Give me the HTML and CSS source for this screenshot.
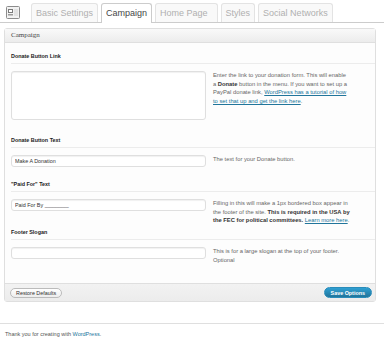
FILE: index.html
```html
<!DOCTYPE html>
<html lang="en">
<head>
    <meta charset="UTF-8">
    <meta name="viewport" content="width=device-width, initial-scale=1.0">
    <title>Theme Options</title>
    <link rel="stylesheet" href="styles.css">
</head>
<body>
    <div class="tabs">
        <span class="screen-icon">
            <svg width="14" height="13" viewBox="0 0 14 13">
                <rect x="0.5" y="0.5" width="13" height="12" rx="1" fill="#f2f2f2" stroke="#8c8c8c"/>
                <rect x="2.5" y="3.5" width="4" height="3" fill="#fff" stroke="#7a7a7a"/>
                <rect x="2" y="8" width="5" height="1.5" fill="#9a9a9a"/>
                <rect x="8" y="3" width="4" height="7" fill="#e2e2e2"/>
            </svg>
        </span>
        <a class="tab" href="#">Basic Settings</a>
        <a class="tab active" href="#">Campaign</a>
        <a class="tab tab-wide" href="#">Home Page</a>
        <a class="tab" href="#">Styles</a>
        <a class="tab" href="#">Social Networks</a>
    </div>

    <div class="panel">
        <h3 class="panel-head">Campaign</h3>
        <div class="panel-body">
            <div class="row">
                <h4 class="row-label">Donate Button Link</h4>
                <div class="row-body row-link">
                    <textarea class="field field-area"></textarea>
                    <p class="desc">Enter the link to your donation form. This will enable a <b>Donate</b> button in the menu. If you want to set up a PayPal donate link, <a href="#">WordPress has a tutorial of how to set that up and get the link here</a>.</p>
                </div>
            </div>

            <div class="row">
                <h4 class="row-label">Donate Button Text</h4>
                <div class="row-body row-text">
                    <input class="field" type="text" value="Make A Donation">
                    <p class="desc">The text for your Donate button.</p>
                </div>
            </div>

            <div class="row">
                <h4 class="row-label">"Paid For" Text</h4>
                <div class="row-body row-paid">
                    <input class="field" type="text" value="Paid For By ________">
                    <p class="desc">Filling in this will make a 1px bordered box appear in the footer of the site. <b>This is required in the USA by the FEC for political committees.</b> <a href="#">Learn more here</a>.</p>
                </div>
            </div>

            <div class="row">
                <h4 class="row-label">Footer Slogan</h4>
                <div class="row-body row-slogan">
                    <input class="field" type="text" value="">
                    <p class="desc">This is for a large slogan at the top of your footer. Optional</p>
                </div>
            </div>
        </div>
        <div class="panel-foot">
            <button class="btn">Restore Defaults</button>
            <button class="btn btn-primary">Save Options</button>
        </div>
    </div>

    <div class="footer">
        <p>Thank you for creating with <a href="#">WordPress</a>.</p>
    </div>
</body>
</html>
```

FILE: styles.css
```css
body {
    margin: 0;
    background-color: #fff;
    color: #333;
    font-family: "Liberation Sans", Arial, sans-serif;
}

a {
    color: #21759b;
}

/* tabs */
.tabs {
    display: flex;
    align-items: flex-end;
    height: 22px;
    border-bottom: 1px solid #ccc;
}

.screen-icon {
    display: block;
    width: 14px;
    height: 13px;
    margin: 0 8px 3px 6px;
}

.screen-icon svg {
    display: block;
}

.tab {
    display: block;
    height: 19px;
    box-sizing: border-box;
    padding: 0 4px;
    margin-left: 3px;
    border: 1px solid #e3e3e3;
    border-bottom: none;
    border-radius: 3px 3px 0 0;
    background-color: #f9f9f9;
    color: #b0b0b0;
    font-size: 9px;
    line-height: 18px;
    text-decoration: none;
}

.tab-wide {
    padding-right: 9px;
}

.tab.active {
    height: 20px;
    margin-bottom: -1px;
    border-color: #ccc;
    background-color: #fff;
    color: #464646;
}

/* panel */
.panel {
    margin: 5px 8px 0 4px;
    border: 1px solid #dfdfdf;
    border-radius: 3px;
    background-color: #fdfdfd;
}

.panel-head {
    margin: 0;
    height: 13px;
    padding-left: 6px;
    border-bottom: 1px solid #dfdfdf;
    background: linear-gradient(#f9f9f9, #ececec);
    color: #464646;
    font-family: "Liberation Serif", "Times New Roman", serif;
    font-size: 7px;
    font-weight: normal;
    line-height: 13px;
}

.panel-body {
    padding-top: 4px;
}

.row {
    padding-left: 6px;
}

.row-label {
    margin: 0;
    padding: 5px 0 3px;
    border-bottom: 1px solid #ececec;
    color: #222;
    font-size: 5.4px;
    font-weight: bold;
    line-height: 8px;
}

.row-body {
    display: flex;
    align-items: flex-start;
    gap: 7px;
    padding-top: 7px;
    box-sizing: border-box;
}

.row-link {
    height: 67px;
}

.row-text {
    height: 27px;
}

.row-paid {
    height: 31px;
}

.row-slogan {
    height: 43px;
}

.field {
    width: 195px;
    height: 12px;
    box-sizing: border-box;
    margin: 0;
    padding: 0 3px;
    border: 1px solid #dfdfdf;
    border-radius: 3px;
    background-color: #fff;
    box-shadow: inset 0 1px 1px rgba(0, 0, 0, 0.06);
    color: #333;
    font-family: "Liberation Sans", Arial, sans-serif;
    font-size: 5.4px;
}

.field-area {
    height: 49px;
    resize: none;
}

.desc {
    width: 137px;
    margin: 0;
    color: #666;
    font-size: 5.8px;
    line-height: 8.6px;
}

.desc b {
    color: #333;
}

/* footer bar */
.panel-foot {
    display: flex;
    justify-content: space-between;
    align-items: center;
    height: 17px;
    padding: 0 3px 0 5px;
    border-top: 1px solid #dfdfdf;
    background: linear-gradient(#f2f2f2, #ececec);
}

.btn {
    height: 10px;
    padding: 0 5px;
    border: 1px solid #bbb;
    border-radius: 6px;
    background: linear-gradient(#fff, #ededed);
    color: #333;
    font-family: "Liberation Sans", Arial, sans-serif;
    font-size: 5.4px;
    line-height: 8px;
    white-space: nowrap;
}

.btn-primary {
    height: 11px;
    padding: 0 6px;
    border-color: #298cba;
    background: linear-gradient(#2e9fd2, #21759b);
    color: #fff;
    font-weight: bold;
}

.footer {
    margin-top: 21px;
    border-top: 1px solid #dfdfdf;
    padding: 6px 5px 0;
}

.footer p {
    margin: 0;
    color: #555;
    font-size: 5.5px;
    line-height: 8px;
}

.footer a {
    text-decoration: none;
}
```
